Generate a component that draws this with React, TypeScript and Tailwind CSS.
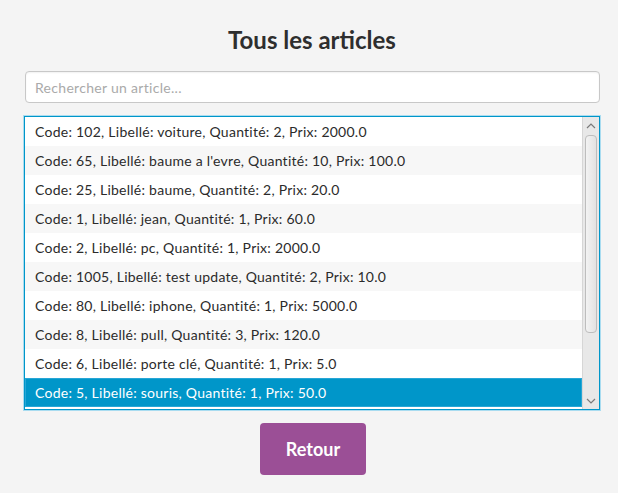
import React, { useState } from "react";

type Article = {
  code: number;
  libelle: string;
  quantite: number;
  prix: string;
};

const articles: Article[] = [
  { code: 102, libelle: "voiture", quantite: 2, prix: "2000.0" },
  { code: 65, libelle: "baume a l'evre", quantite: 10, prix: "100.0" },
  { code: 25, libelle: "baume", quantite: 2, prix: "20.0" },
  { code: 1, libelle: "jean", quantite: 1, prix: "60.0" },
  { code: 2, libelle: "pc", quantite: 1, prix: "2000.0" },
  { code: 1005, libelle: "test update", quantite: 2, prix: "10.0" },
  { code: 80, libelle: "iphone", quantite: 1, prix: "5000.0" },
  { code: 8, libelle: "pull", quantite: 3, prix: "120.0" },
  { code: 6, libelle: "porte clé", quantite: 1, prix: "5.0" },
  { code: 5, libelle: "souris", quantite: 1, prix: "50.0" },
];

export default function App() {
  const [query, setQuery] = useState("");
  const [selected, setSelected] = useState(9);

  return (
    <div className="w-[618px] h-[493px] bg-[#f4f4f4] pl-[24px] pt-[26px] font-['Lato',sans-serif] text-[#333]">
      <div className="w-[576px] flex flex-col items-center">
        <h1 className="text-[24px] font-bold leading-[28px] text-[#2e2e2e]">Tous les articles</h1>

        <input
          value={query}
          onChange={(e) => setQuery(e.target.value)}
          placeholder="Rechercher un article..."
          className="mt-[17px] self-end w-[575px] h-[32px] rounded-[4px] border border-[#c8c8c8] bg-white px-[9px] text-[14px] tracking-[0.3px] text-[#333] placeholder:text-[#aaaaaa] outline-none shadow-[inset_0_1px_2px_rgba(0,0,0,0.06)]"
        />

        {/* list view */}
        <div className="mt-[13px] w-[576px] h-[294px] border border-[#0096c9] shadow-[0_0_0_1px_#a9dcf0] bg-white flex">
          <div className="flex-1 flex flex-col">
            {articles.map((a, i) => {
              const isSel = selected === i;
              return (
                <div
                  key={a.code}
                  onClick={() => setSelected(i)}
                  className={`h-[29px] flex items-center text-[14px] tracking-[0.25px] whitespace-nowrap ${
                    isSel
                      ? "bg-[#0096c9] text-white border border-[#27a6d6] pl-[9px]"
                      : i % 2 === 1
                      ? "bg-[#f7f7f7] text-[#2b2b2b] pl-[10px]"
                      : "bg-white text-[#2b2b2b] pl-[10px]"
                  }`}
                >
                  Code: {a.code}, Libellé: {a.libelle}, Quantité: {a.quantite}, Prix: {a.prix}
                </div>
              );
            })}
          </div>

          {/* scrollbar */}
          <div className="w-[17px] bg-[#e8e8e8] border-l border-[#d6d6d6] flex flex-col items-center">
            <svg width="10" height="14" viewBox="0 0 10 14" className="mt-[2px]">
              <path d="M1 9 L5 5 L9 9" fill="none" stroke="#7a7a7a" strokeWidth="1.2" />
            </svg>
            <div className="mt-[2px] w-[12px] h-[198px] rounded-[4px] border border-[#bdbdbd] bg-gradient-to-r from-[#f3f3f3] to-[#e2e2e2]" />
            <div className="flex-1" />
            <svg width="10" height="14" viewBox="0 0 10 14" className="mb-[1px]">
              <path d="M1 5 L5 9 L9 5" fill="none" stroke="#7a7a7a" strokeWidth="1.2" />
            </svg>
          </div>
        </div>

        <button className="mt-[13px] ml-[2px] w-[106px] h-[52px] rounded-[4px] bg-[#9b4f96] text-white text-[18px] font-bold">
          Retour
        </button>
      </div>
    </div>
  );
}
